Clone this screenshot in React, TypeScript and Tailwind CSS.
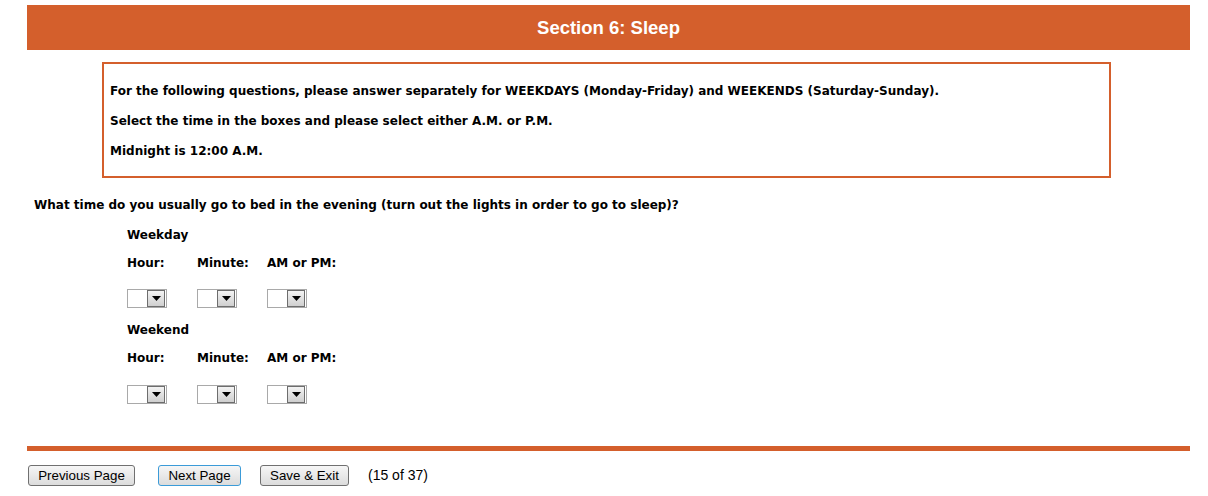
import React from "react";

const verdana = { fontFamily: '"DejaVu Sans", Verdana, sans-serif' };
const arial = { fontFamily: '"Liberation Sans", Arial, sans-serif' };

function TimeSelect() {
  return (
    <div className="w-10 h-[19px] border border-[#a9a9a9] bg-white flex justify-end items-center pr-px">
      <div className="w-[18px] h-[17px] border border-[#6d6d6d] bg-gradient-to-b from-[#f3f3f3] to-[#cfcfcf] flex items-center justify-center">
        <svg width="9" height="5" viewBox="0 0 9 5">
          <path d="M0 0 H9 L4.5 5 Z" fill="#000" />
        </svg>
      </div>
    </div>
  );
}

function TimeGroup({ label, first }: { label: string; first?: boolean }) {
  return (
    <div className={`pl-[127px] ${first ? "mt-[10px]" : "mt-[12px]"}`}>
      <div className="h-5 leading-5">{label}</div>
      <div className="flex mt-2 h-5 leading-5">
        <span className="w-[70px]">Hour:</span>
        <span className="w-[70px]">Minute:</span>
        <span>AM or PM:</span>
      </div>
      <div className={`flex ${first ? "mt-[16px]" : "mt-[17px]"}`}>
        <div className="w-[70px]"><TimeSelect /></div>
        <div className="w-[70px]"><TimeSelect /></div>
        <div><TimeSelect /></div>
      </div>
    </div>
  );
}

function NavButton({ label, width, focused }: { label: string; width: string; focused?: boolean }) {
  return (
    <button
      className={`h-[21px] ${width} rounded-[3px] border text-[13.33px] leading-none text-black bg-gradient-to-b from-[#f6f6f6] to-[#dcdcdc] ${
        focused ? "border-[#3b9bd8]" : "border-[#707070]"
      }`}
      style={arial}
    >
      {label}
    </button>
  );
}

export default function App() {
  return (
    <div className="bg-white w-[1208px] h-[496px] overflow-hidden text-[12px] font-bold text-black" style={verdana}>
      <div
        className="ml-[27px] mt-[5px] w-[1163px] h-[45px] bg-[#d45f2c] flex items-center justify-center text-white text-[18.5px] font-bold"
        style={arial}
      >
        Section 6: Sleep
      </div>

      <div className="ml-[102px] mt-3 w-[1009px] h-[116px] border-2 border-[#d45f2c] pl-[6px] pt-[12px]">
        <p className="h-[30px] leading-[30px]">
          For the following questions, please answer separately for WEEKDAYS (Monday-Friday) and WEEKENDS (Saturday-Sunday).
        </p>
        <p className="h-[30px] leading-[30px]">Select the time in the boxes and please select either A.M. or P.M.</p>
        <p className="h-[31px] leading-[31px]">Midnight is 12:00 A.M.</p>
      </div>

      <div className="ml-[34px] mt-[17px] h-5 leading-5">
        What time do you usually go to bed in the evening (turn out the lights in order to go to sleep)?
      </div>

      <TimeGroup label="Weekday" first />
      <TimeGroup label="Weekend" />

      <div className="ml-[27px] mt-[42px] w-[1163px] h-[5px] bg-[#d45f2c]" />

      <div className="ml-[28px] mt-[14px] flex items-center font-normal">
        <NavButton label="Previous Page" width="w-[107px]" />
        <div className="ml-[23px]">
          <NavButton label="Next Page" width="w-[83px]" focused />
        </div>
        <div className="ml-[19px]">
          <NavButton label="Save & Exit" width="w-[89px]" />
        </div>
        <span className="ml-[19px] text-[14px]" style={arial}>
          (15 of 37)
        </span>
      </div>
    </div>
  );
}
